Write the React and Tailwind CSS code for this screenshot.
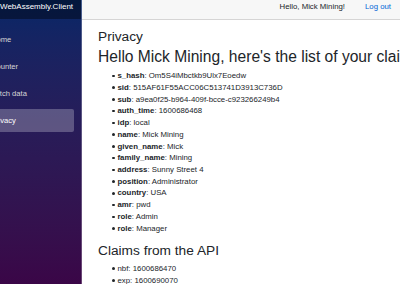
import React from "react";

const claims = [
  ["s_hash", "Om5S4iMbctkb9Ulx7Eoedw"],
  ["sid", "515AF61F55ACC06C513741D3913C736D"],
  ["sub", "a9ea0f25-b964-409f-bcce-c923266249b4"],
  ["auth_time", "1600686468"],
  ["idp", "local"],
  ["name", "Mick Mining"],
  ["given_name", "Mick"],
  ["family_name", "Mining"],
  ["address", "Sunny Street 4"],
  ["position", "Administrator"],
  ["country", "USA"],
  ["amr", "pwd"],
  ["role", "Admin"],
  ["role", "Manager"],
];

const apiClaims = ["nbf: 1600686470", "exp: 1600690070"];

const navItems = [
  { label: "Home", active: false },
  { label: "Counter", active: false },
  { label: "Fetch data", active: false },
  { label: "Privacy", active: true },
];

// small disc bullet, the browser's default one sits too far left at this size
function Bullet() {
  return <span className="mr-[3px] h-[2.5px] w-[2.5px] shrink-0 rounded-full bg-[#212529]" />;
}

export default function App() {
  return (
    <div
      className="flex h-[284px] w-[400px] overflow-hidden bg-white text-[#212529]"
      style={{ fontFamily: '"Liberation Sans", Arial, sans-serif' }}
    >
      {/* Sidebar */}
      <div className="flex w-[82px] shrink-0 flex-col overflow-hidden border-r border-white/25 bg-linear-to-b from-[#052767] to-[#3a0647]">
        <div className="h-[19px] shrink-0 bg-black/40 pt-[1px] text-[8px] leading-[11px] whitespace-nowrap text-white">
          WebAssembly.Client
        </div>
        <ul className="ml-[-30px] pt-[9px] pr-[7px]">
          {navItems.map((item) => (
            <li key={item.label} className="mb-[4px]">
              <div
                className={`flex h-[23px] items-center rounded-[2px] pl-[21px] text-[7.6px] whitespace-nowrap ${
                  item.active ? "bg-white/25 text-white" : "text-[#d7d7d7]"
                }`}
              >
                {item.label}
              </div>
            </li>
          ))}
        </ul>
      </div>

      {/* Main */}
      <div className="flex min-w-0 flex-1 flex-col">
        <div className="flex h-[20px] shrink-0 justify-end gap-[20px] border-b border-[#d6d5d5] bg-[#f7f7f7] pt-[1px] pr-[9px] text-[7.8px] leading-[11.7px] whitespace-nowrap">
          <span>Hello, Mick Mining!</span>
          <span className="text-[#0366d6]">Log out</span>
        </div>

        <div className="pt-[9px] pl-[16px] whitespace-nowrap">
          <h3 className="mb-[3px] text-[13.7px] leading-[1.2]">Privacy</h3>
          <h2 className="mb-[3px] text-[15.6px] leading-[1.2]">
            Hello Mick Mining, here's the list of your claims
          </h2>
          <ul className="mb-[9px] pl-[14px] text-[7.82px] leading-[11.73px]">
            {claims.map(([k, v], i) => (
              <li key={i} className="flex items-center">
                <Bullet />
                <span>
                  <span className="font-bold">{k}</span>: {v}
                </span>
              </li>
            ))}
          </ul>
          <h3 className="mb-[3px] text-[13.7px] leading-[1.2]">Claims from the API</h3>
          <ul className="pl-[14px] text-[7.82px] leading-[11.73px]">
            {apiClaims.map((c) => (
              <li key={c} className="flex items-center">
                <Bullet />
                <span>{c}</span>
              </li>
            ))}
          </ul>
        </div>
      </div>
    </div>
  );
}
